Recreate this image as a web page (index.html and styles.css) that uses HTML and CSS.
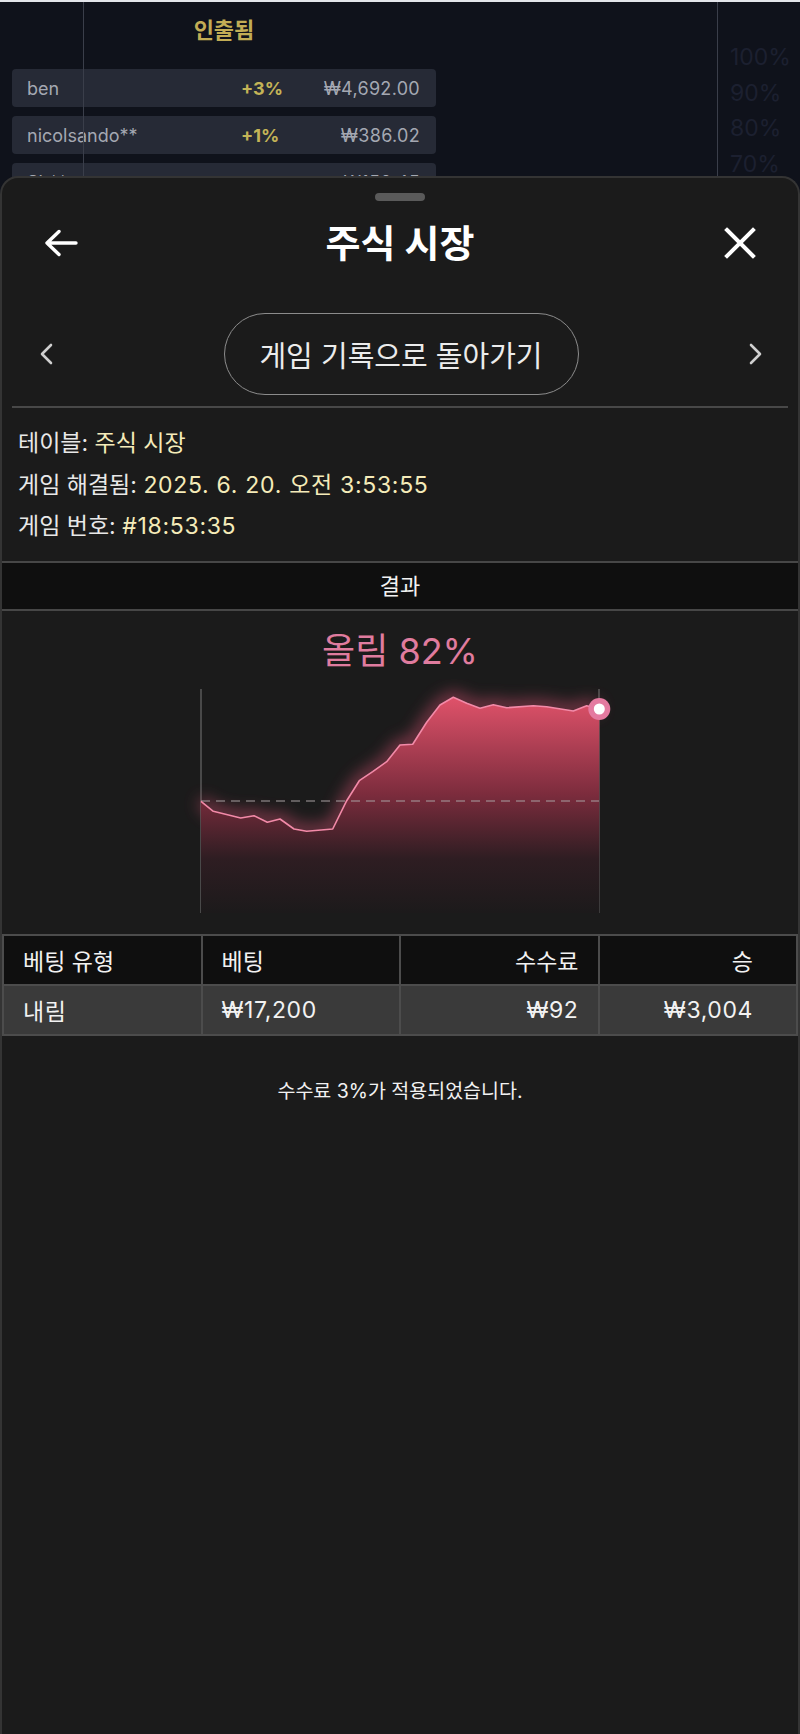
FILE: index.html
```html
<!DOCTYPE html>
<html lang="ko">
<head>
<meta charset="utf-8">
<title>주식 시장</title>
<link rel="stylesheet" href="styles.css">
</head>
<body>
<div class="stage">
  <div class="topstrip"></div>
  <div class="board">
    <div class="panel">
      <div class="panel-title">인출됨</div>
      <div class="rows">
        <div class="row"><span class="name">ben</span><span class="pct">+3%</span><span class="amt">₩4,692.00</span></div>
        <div class="row"><span class="name">nicolsando**</span><span class="pct">+1%</span><span class="amt">₩386.02</span></div>
        <div class="row"><span class="name">Sh**</span><span class="pct">+2%</span><span class="amt">₩150.45</span></div>
      </div>
    </div>
    <div class="scale">
      <div>100%</div><div>90%</div><div>80%</div><div>70%</div>
    </div>
  </div>
  <div class="vline vl1"></div>
  <div class="vline vl2"></div>

  <div class="sheet">
    <div class="handle"></div>
    <div class="header">
      <svg class="ic-back" width="34" height="28" viewBox="0 0 34 28"><path d="M32 14H3M15 2.5L3 14l12 11.5" fill="none" stroke="#fff" stroke-width="3.4" stroke-linecap="round" stroke-linejoin="round"/></svg>
      <div class="title">주식 시장</div>
      <svg class="ic-close" width="32" height="32" viewBox="0 0 32 32"><path d="M3 3L29 29M29 3L3 29" fill="none" stroke="#fff" stroke-width="4" stroke-linecap="square"/></svg>
    </div>
    <div class="nav">
      <svg width="14" height="22" viewBox="0 0 14 22"><path d="M12 2L3 11l9 9" fill="none" stroke="#cfcfcf" stroke-width="2.6" stroke-linecap="round" stroke-linejoin="round"/></svg>
      <div class="pill">게임 기록으로 돌아가기</div>
      <svg width="14" height="22" viewBox="0 0 14 22"><path d="M2 2l9 9-9 9" fill="none" stroke="#cfcfcf" stroke-width="2.6" stroke-linecap="round" stroke-linejoin="round"/></svg>
    </div>
    <div class="sep"></div>
    <div class="info">
      <div>테이블: <span class="val">주식 시장</span></div>
      <div>게임 해결됨: <span class="val num">2025. 6. 20. 오전 3:53:55</span></div>
      <div>게임 번호: <span class="val num">#18:53:35</span></div>
    </div>
    <div class="result-bar">결과</div>
    <div class="rise">올림 82%</div>
    <svg class="chart" width="440" height="240" viewBox="0 0 440 240">
      <defs>
        <linearGradient id="fillg" x1="0" y1="18" x2="0" y2="234" gradientUnits="userSpaceOnUse">
          <stop offset="0" stop-color="#e0526a"/>
          <stop offset="0.45" stop-color="#7c2c3d"/>
          <stop offset="0.75" stop-color="#2e1d22"/>
          <stop offset="1" stop-color="#1c1a1b"/>
        </linearGradient>
        <filter id="glow" x="-20%" y="-30%" width="140%" height="160%">
          <feGaussianBlur stdDeviation="8"/>
        </filter>
      </defs>
      <line x1="21" y1="10" x2="21" y2="234" stroke="#6a6a6a" stroke-width="1.2"/>
      <line x1="419" y1="10" x2="419" y2="234" stroke="#6a6a6a" stroke-width="1.2"/>
      <path d="M21 122.3L33.3 132.3L60.7 139L74 136.7L87.3 143.3L100 140L114 150L126.7 152.3L152.7 150L166.7 121.7L179.3 101.7L192.7 92.7L206.7 82.7L220 66L232.7 65.3L246.7 43.3L260 26L273.3 18.3L286.7 24.3L300 29.3L313.3 25.7L326.7 28.7L353.3 26.7L366.7 27.7L393.3 32L406.7 26.7L419.3 30" fill="none" stroke="#e8567a" stroke-width="10" opacity="0.6" filter="url(#glow)"/>
      <path d="M21 122.3L33.3 132.3L60.7 139L74 136.7L87.3 143.3L100 140L114 150L126.7 152.3L152.7 150L166.7 121.7L179.3 101.7L192.7 92.7L206.7 82.7L220 66L232.7 65.3L246.7 43.3L260 26L273.3 18.3L286.7 24.3L300 29.3L313.3 25.7L326.7 28.7L353.3 26.7L366.7 27.7L393.3 32L406.7 26.7L419.3 30L419.3 234L21 234Z" fill="url(#fillg)"/>
      <line x1="21" y1="122" x2="419" y2="122" stroke="#a8a0a2" stroke-width="1.2" stroke-dasharray="9 6"/>
      <path d="M21 122.3L33.3 132.3L60.7 139L74 136.7L87.3 143.3L100 140L114 150L126.7 152.3L152.7 150L166.7 121.7L179.3 101.7L192.7 92.7L206.7 82.7L220 66L232.7 65.3L246.7 43.3L260 26L273.3 18.3L286.7 24.3L300 29.3L313.3 25.7L326.7 28.7L353.3 26.7L366.7 27.7L393.3 32L406.7 26.7L419.3 30" fill="none" stroke="#f28aa8" stroke-width="1.6" stroke-linejoin="round"/>
      <circle cx="419.3" cy="30" r="11" fill="#e47aa0"/>
      <circle cx="419.3" cy="30" r="5.5" fill="#fff"/>
    </svg>
    <table class="bets">
      <thead>
        <tr><th class="l">베팅 유형</th><th class="l">베팅</th><th class="r">수수료</th><th class="r r4">승</th></tr>
      </thead>
      <tbody>
        <tr><td class="l">내림</td><td class="l">₩17,200</td><td class="r">₩92</td><td class="r r4">₩3,004</td></tr>
      </tbody>
    </table>
    <div class="note">수수료 3%가 적용되었습니다.</div>
  </div>
</div>
</body>
</html>
```

FILE: styles.css
```css
html, body {
  margin: 0;
  padding: 0;
}
body {
  background: #0f121b;
  font-family: Inter, "Noto Sans CJK KR", sans-serif;
  color: #fff;
}
.stage {
  position: relative;
  width: 800px;
  height: 1734px;
  overflow: hidden;
  background: #0f121b;
}
.topstrip {
  height: 2px;
  background: #e3e5ea;
}
.board {
  display: flex;
}
.panel {
  margin-left: 12px;
  width: 424px;
}
.panel-title {
  padding-top: 13px;
  line-height: 30px;
  text-align: center;
  font-size: 22px;
  font-weight: 700;
  color: #c2ad55;
}
.rows {
  margin-top: 24px;
  display: flex;
  flex-direction: column;
  gap: 9px;
}
.row {
  display: grid;
  grid-template-columns: 214px 1fr auto;
  align-items: center;
  height: 38px;
  padding: 0 16px 0 15px;
  background: #262a36;
  border-radius: 4px;
  font-size: 18px;
  color: #a4a8b2;
}
.pct {
  color: #c4b457;
  font-weight: 700;
}
.amt {
  text-align: right;
  letter-spacing: 0.3px;
}
.scale {
  margin-left: 294px;
  padding-top: 38px;
  font-size: 23px;
  line-height: 35.5px;
  color: #1c2030;
}
.vline {
  position: absolute;
  top: 2px;
  bottom: 0;
  width: 1px;
  background: #3a3e4a;
}
.vl1 { left: 83px; }
.vl2 { left: 717px; }

.sheet {
  position: absolute;
  top: 176px;
  left: 0;
  right: 0;
  bottom: 0;
  box-sizing: border-box;
  background: #1b1b1b;
  border: 2px solid #343434;
  border-bottom: none;
  border-radius: 18px 18px 0 0;
  padding-top: 15px;
}
.handle {
  width: 50px;
  height: 8px;
  margin: 0 auto;
  border-radius: 4px;
  background: #5a5a5a;
}
.header {
  display: grid;
  grid-template-columns: 1fr auto 1fr;
  align-items: center;
  height: 56px;
  margin-top: 14px;
  padding: 0 42px;
}
.ic-close {
  justify-self: end;
}
.title {
  font-size: 38px;
  font-weight: 700;
  line-height: 56px;
  color: #fff;
}
.nav {
  display: flex;
  align-items: center;
  justify-content: space-between;
  height: 82px;
  margin-top: 42px;
  padding: 0 35px 0 37px;
}
.pill {
  box-sizing: border-box;
  width: 355px;
  height: 82px;
  border: 1.5px solid #8c8c8c;
  border-radius: 41px;
  display: flex;
  align-items: center;
  justify-content: center;
  font-size: 29px;
  color: #ececec;
}
.sep {
  height: 2px;
  margin: 11px 10px 0;
  background: #484848;
}
.info {
  padding: 15px 16px 0;
  font-size: 23px;
  line-height: 41.5px;
  color: #e8e8e8;
}
.val {
  color: #f5ebb9;
}
.val.num {
  letter-spacing: 0.7px;
}
.result-bar {
  margin-top: 13px;
  height: 46px;
  line-height: 46px;
  border-top: 2px solid #474747;
  border-bottom: 2px solid #474747;
  background: #0f0f0f;
  text-align: center;
  font-size: 22px;
  color: #f2f2f2;
}
.rise {
  margin-top: 20px;
  line-height: 40px;
  text-align: center;
  font-size: 36px;
  color: #e07c9f;
}
.chart {
  display: block;
  margin: 8px auto 0;
}
.bets {
  margin-top: 15px;
  width: 100%;
  table-layout: fixed;
  border-collapse: collapse;
  font-size: 23px;
}
.bets th, .bets td {
  height: 48px;
  padding: 0 19px;
  border: 2px solid #4c4c4c;
  font-weight: 400;
  color: #f2f2f2;
}
.bets th {
  background: #0f0f0f;
}
.bets td {
  background: #3a3a3a;
  letter-spacing: 0.6px;
}
.bets .l { text-align: left; }
.bets .r { text-align: right; }
.bets .r4 { padding-right: 43px; }
.note {
  margin-top: 43px;
  line-height: 24px;
  text-align: center;
  font-size: 19.5px;
  color: #f2f2f2;
}
```
